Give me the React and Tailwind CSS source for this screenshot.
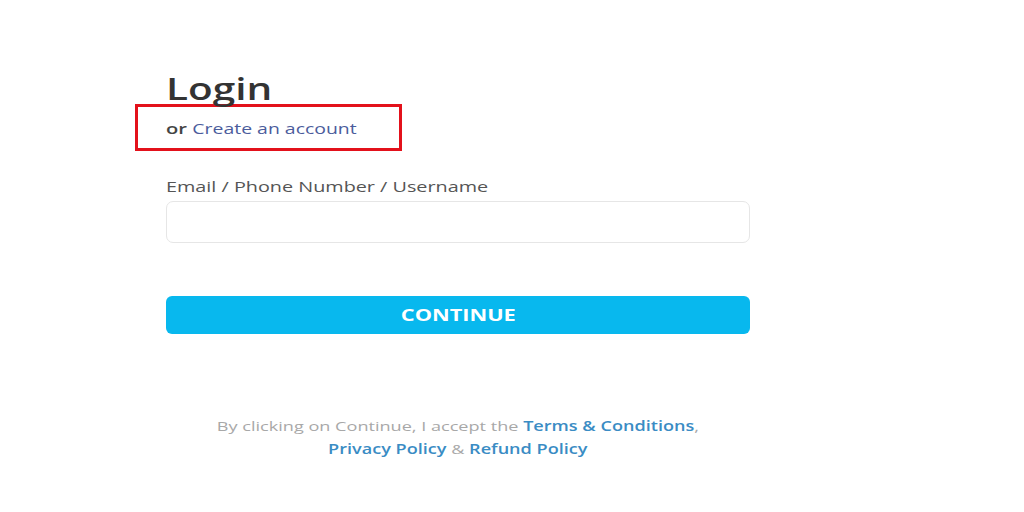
export default function App() {
  return (
    <div
      className="w-[1024px] h-[512px] bg-white overflow-hidden"
      style={{ fontFamily: '"Open Sans", "Noto Sans", sans-serif' }}
    >
      <div className="pl-[166px] pt-[70px] w-[750px]">
        <h1 className="text-[30px] leading-[38px] font-semibold text-[#333]">
          <span className="inline-block origin-left scale-x-[1.35]">Login</span>
        </h1>

        <div className="-ml-[31px] mt-[-4px] w-[267px] h-[47px] border-[3px] border-[#e3111b] flex items-center pl-[28px]">
          <span className="inline-block origin-left scale-x-[1.34] whitespace-nowrap">
            <span className="text-[15px] font-semibold text-[#444]">or</span>
            <span className="ml-[4px] text-[14.5px] text-[#4b5c9c]">Create an account</span>
          </span>
        </div>

        <label className="block mt-[24px] text-[15px] text-[#555]">
          <span className="inline-block origin-left scale-x-[1.32] whitespace-nowrap">
            Email / Phone Number / Username
          </span>
        </label>
        <input
          type="text"
          className="mt-[3px] block w-[584px] h-[42px] rounded-[7px] border border-[#e6e6e6] outline-none px-3"
        />

        <button className="mt-[53px] w-[584px] h-[38px] rounded-[6px] bg-[#08b8ee] text-white text-[16px] font-bold flex items-center justify-center">
          <span className="inline-block scale-x-[1.36]">CONTINUE</span>
        </button>

        <div className="mt-[81px] w-[584px] text-center text-[13.5px] leading-[23px] text-[#a8a8a8]">
          <p>
            <span className="inline-block scale-x-[1.34] whitespace-nowrap">
              By clicking on Continue, I accept the{' '}
              <span className="text-[#3a8cc4] font-semibold">Terms &amp; Conditions</span>,
            </span>
          </p>
          <p>
            <span className="inline-block scale-x-[1.34] whitespace-nowrap">
              <span className="text-[#3a8cc4] font-semibold">Privacy Policy</span> &amp;{' '}
              <span className="text-[#3a8cc4] font-semibold">Refund Policy</span>
            </span>
          </p>
        </div>
      </div>
    </div>
  );
}
